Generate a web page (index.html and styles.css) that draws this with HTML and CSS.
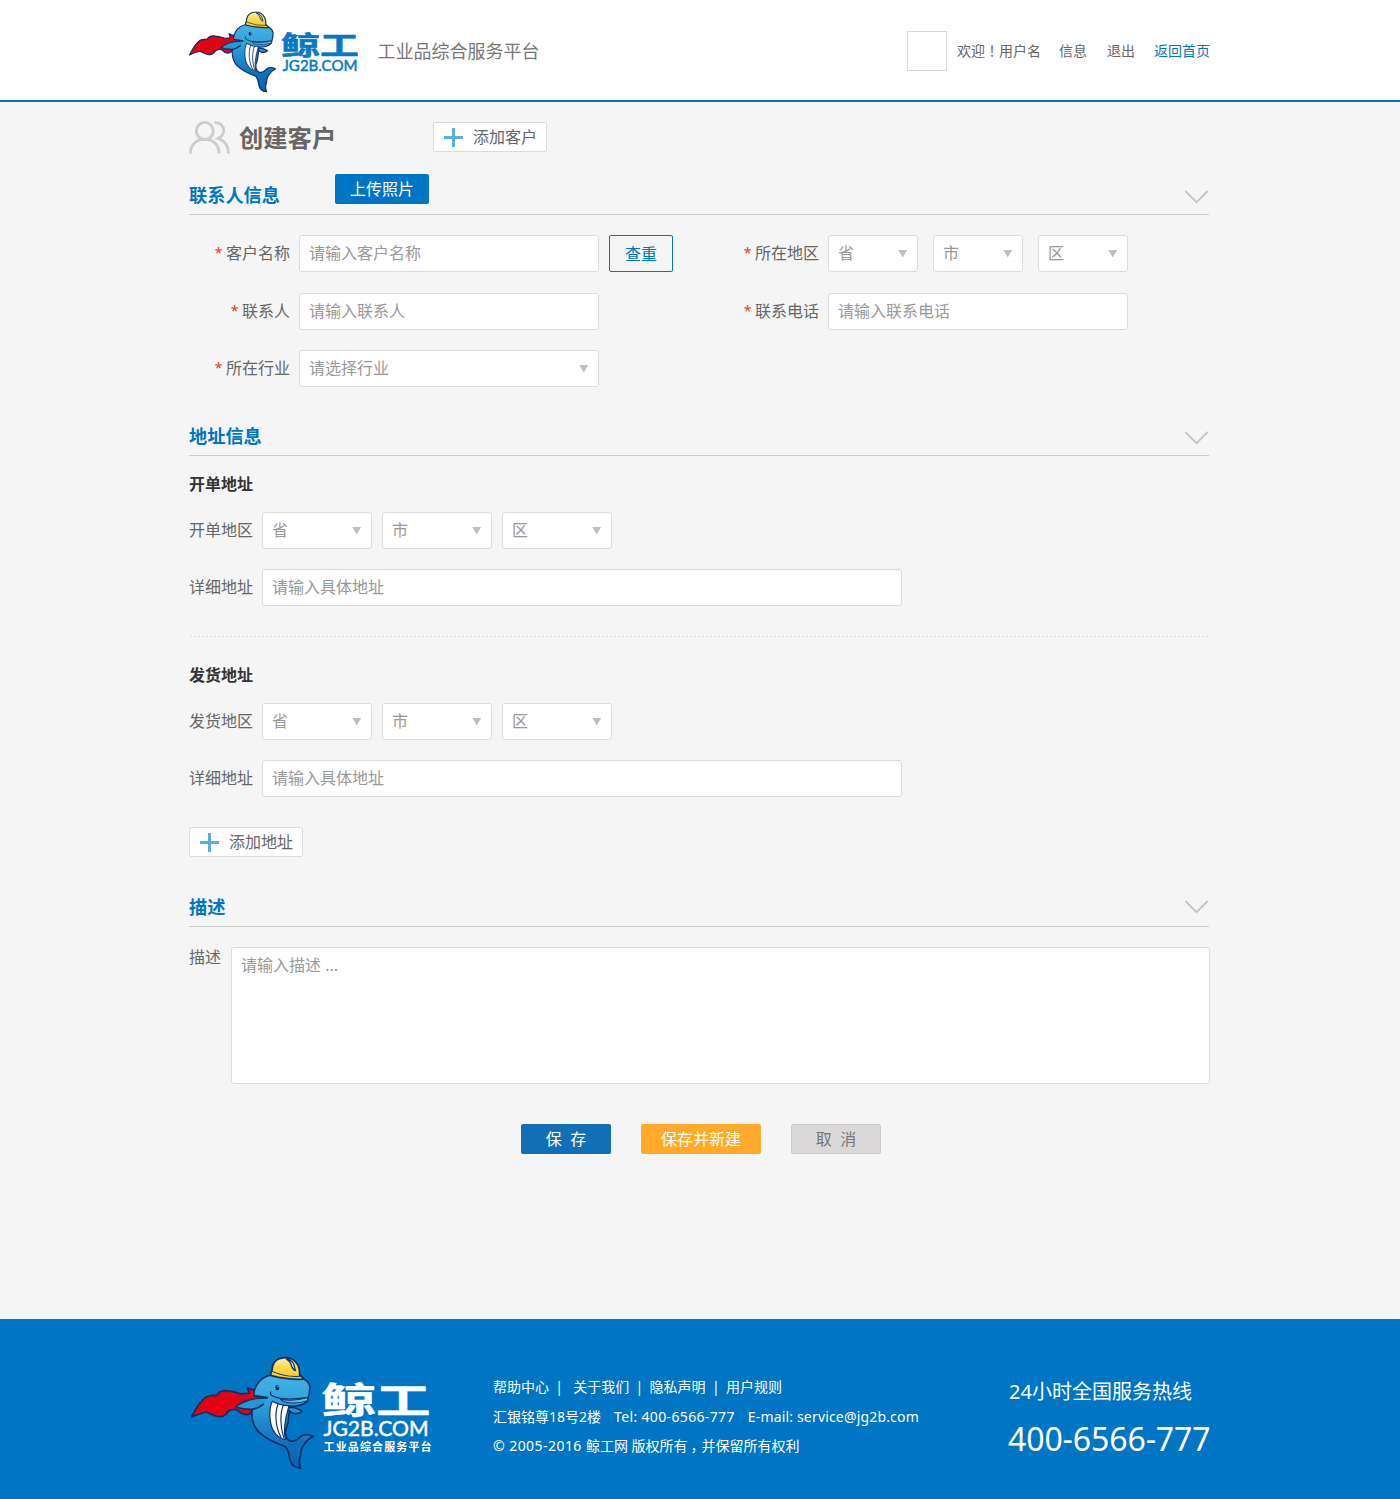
FILE: index.html
```html
<!DOCTYPE html>
<html lang="zh-CN">
<head>
<meta charset="utf-8">
<title>创建客户</title>
<link rel="stylesheet" href="styles.css">
</head>
<body>
<svg class="defs" width="0" height="0" aria-hidden="true">
  <defs>
    <linearGradient id="skin" x1="0" y1="0" x2="0" y2="1">
      <stop offset="0" stop-color="#45b4e6"/><stop offset=".35" stop-color="#2a9cd8"/><stop offset=".7" stop-color="#1272bd"/><stop offset="1" stop-color="#0a5fb0"/>
    </linearGradient>
    <linearGradient id="hat" x1="0" y1="0" x2="0" y2="1">
      <stop offset="0" stop-color="#fff0a8"/><stop offset=".45" stop-color="#ffd84a"/><stop offset="1" stop-color="#fbc51d"/>
    </linearGradient>
    <symbol id="whale" viewBox="32 35 370 338" preserveAspectRatio="none">
      <g stroke="#0b2f66" stroke-width="5" stroke-linejoin="round" stroke-linecap="round">
        <path fill="#e60012" d="M34 216C47 192 58 169 78 156Q92 150 109 152Q116 138 135 137Q160 138 184 147L208 145L202 129L232 139L262 159L222 190Q213 209 197 209Q181 207 171 194Q148 190 139 207Q128 219 107 213Q90 207 78 201Q55 207 34 216Z"/>
        <path fill="url(#skin)" d="M274 90Q246 95 230 120Q220 136 222 152L262 158Q228 163 217 192Q211 232 235 260Q260 285 316 305Q327 319 329 341Q332 366 362 370Q354 350 362 330Q361 313 370 302Q382 283 400 274Q374 262 359 277Q348 291 329 288Q314 280 317 255Q326 236 329 184Q368 184 382 168Q391 142 389 122Q384 103 360 98Z"/>
        <path fill="#fff" stroke-width="3.500" d="M277 169C266 190 267 237 281 258Q292 278 316 284Q307 247 327 182Q300 182 277 169Z"/>
        <path fill="none" stroke-width="3.500" d="M294 177C283 207 287 248 303 277M310 181C299 207 301 247 311 278"/>
        <path fill="#2199d6" d="M259 159C227 158 192 165 168 186Q190 194 216 193Q235 190 250 178"/>
        <path fill="#2199d6" d="M327 188Q348 186 366 199Q352 210 338 204Q329 200 327 196"/>
        <path fill="none" stroke-width="3.500" d="M272 141Q269 150 280 154Q309 168 382 158"/>
        <path fill="#5cc0ea" stroke-width="3" d="M301 163Q340 171 383 158L383 167Q348 179 313 171Z"/>
        <path fill="url(#hat)" d="M276 78Q275 51 299 41Q335 30 352 58Q359 68 359 91Q371 97 367 103Q326 105 274 92Q270 82 276 78Z"/>
        <path fill="none" stroke-width="3" d="M278 80Q318 97 360 94"/>
        <path fill="#fff3bd" stroke-width="4" d="M319 42Q342 44 346 77Q338 75 333 58Q329 48 319 42Z"/>
      </g>
      <path d="M105 204Q145 164 244 158M73 190Q111 158 185 154" fill="none" stroke="#b00f24" stroke-width="2"/>
      <ellipse cx="292" cy="128" rx="6" ry="8" fill="#0b2f66"/><circle cx="294" cy="125" r="1.800" fill="#fff"/>
    </symbol>
    <symbol id="plus" viewBox="0 0 19 19"><path d="M9.500 0v19M0 9.500h19" stroke="#5dade2" stroke-width="3"/></symbol>
    <symbol id="chevron" viewBox="0 0 24 14"><path d="M.3 1L11.500 12.200 22.700 1" fill="none" stroke="#c4c4c4" stroke-width="1.800"/></symbol>
  </defs>
</svg>

<header class="header">
  <div class="wrap header-inner">
    <svg class="logo-small" viewBox="0 0 169 82" role="img" aria-label="鲸工 JG2B.COM">
      <use href="#whale" y=".3" width="87" height="81.300"/>
      <text class="logo-cn" x="92" y="43.500" font-size="26" textLength="78" lengthAdjust="spacingAndGlyphs">鲸工</text>
      <text class="logo-en" x="93.500" y="59.500" font-size="15" textLength="75" lengthAdjust="spacingAndGlyphs">JG2B.COM</text>
    </svg>
    <span class="slogan">工业品综合服务平台</span>
    <nav class="user-nav">
      <span class="avatar"></span>
      <span class="welcome">欢迎<span class="mark" lang="zh-TW">！</span>用户名</span>
      <a class="nav-link" href="#">信息</a>
      <a class="nav-link logout" href="#">退出</a>
      <a class="nav-link home" href="#">返回首页</a>
    </nav>
  </div>
</header>

<main class="wrap main">
  <div class="page-title">
    <svg class="people" viewBox="0 0 41 33" fill="none" stroke="#ccc" stroke-width="2.800">
      <circle cx="15.800" cy="9.900" r="8.500"/>
      <path d="M1.400 32.500C1.500 23.500 7.500 18.400 15.800 18.400S30 23.500 30 32.500M25.300 1.600C31 1.100 34.700 5 34.700 9.400C34.700 13.200 32.500 15.800 29 17.500C36 19.800 39.400 25.500 39.400 32.500"/>
    </svg>
    <h1 class="title">创建客户</h1>
    <button class="add-btn add-customer"><svg class="plus"><use href="#plus"/></svg>添加客户</button>
  </div>

  <section class="section">
    <div class="section-head">
      <h2 class="section-title">联系人信息</h2>
      <button class="upload">上传照片</button>
      <svg class="chevron"><use href="#chevron"/></svg>
    </div>
    <div class="contact-grid">
      <label class="label"><i class="req">*</i>客户名称</label>
      <div class="fields tight"><input class="input" placeholder="请输入客户名称"><button class="check">查重</button></div>
      <label class="label"><i class="req">*</i>所在地区</label>
      <div class="fields wide"><div class="select region">省</div><div class="select region">市</div><div class="select region">区</div></div>

      <label class="label"><i class="req">*</i>联系人</label>
      <div class="fields"><input class="input" placeholder="请输入联系人"></div>
      <label class="label"><i class="req">*</i>联系电话</label>
      <div class="fields"><input class="input" placeholder="请输入联系电话"></div>
    </div>
    <div class="contact-grid industry">
      <label class="label"><i class="req">*</i>所在行业</label>
      <div class="fields"><div class="select">请选择行业</div></div>
    </div>
  </section>

  <section class="section address">
    <div class="section-head">
      <h2 class="section-title">地址信息</h2>
      <svg class="chevron"><use href="#chevron"/></svg>
    </div>
    <h3 class="subtitle">开单地址</h3>
    <div class="address-row">
      <label class="side-label">开单地区</label>
      <div class="fields tight"><div class="select area">省</div><div class="select area">市</div><div class="select area">区</div></div>
    </div>
    <div class="address-row">
      <label class="side-label">详细地址</label>
      <input class="input detail" placeholder="请输入具体地址">
    </div>
    <hr class="divider">
    <h3 class="subtitle shipping">发货地址</h3>
    <div class="address-row">
      <label class="side-label">发货地区</label>
      <div class="fields tight"><div class="select area">省</div><div class="select area">市</div><div class="select area">区</div></div>
    </div>
    <div class="address-row">
      <label class="side-label">详细地址</label>
      <input class="input detail" placeholder="请输入具体地址">
    </div>
    <button class="add-btn add-address"><svg class="plus"><use href="#plus"/></svg>添加地址</button>
  </section>

  <section class="section description">
    <div class="section-head">
      <h2 class="section-title">描述</h2>
      <svg class="chevron chevron-high"><use href="#chevron"/></svg>
    </div>
    <div class="desc-row">
      <label class="desc-label">描述</label>
      <textarea class="textarea" placeholder="请输入描述 ..."></textarea>
    </div>
  </section>

  <div class="actions">
    <button class="action save">保&nbsp; 存</button>
    <button class="action save-new">保存并新建</button>
    <button class="action cancel">取&nbsp; 消</button>
  </div>
</main>

<footer class="footer">
  <div class="wrap footer-inner">
    <svg class="logo-large" viewBox="0 0 243 116" role="img" aria-label="鲸工 JG2B.COM 工业品综合服务平台">
      <use href="#whale" x=".700" y=".600" width="123.300" height="112.700"/>
      <text class="logo-cn" x="131.500" y="57.500" font-size="36" textLength="109" lengthAdjust="spacingAndGlyphs">鲸工</text>
      <text class="logo-en" x="133.500" y="79.500" font-size="21" textLength="105" lengthAdjust="spacingAndGlyphs">JG2B.COM</text>
      <text class="logo-tag" x="133.500" y="95" font-size="11" textLength="108">工业品综合服务平台</text>
    </svg>
    <div class="footer-info">
      <div class="footer-links"><a class="flink">帮助中心</a><i class="bar">|</i><a class="flink about">关于我们</a><i class="bar">|</i><a class="flink">隐私声明</a><i class="bar">|</i><a class="flink">用户规则</a></div>
      <div class="footer-contact"><span class="place">汇银铭尊18号2楼</span><span class="tel">Tel: 400-6566-777</span><span class="mail">E-mail: service@jg2b.com</span></div>
      <div class="copyright"><span class="years">© 2005-2016 </span>鲸工网 版权所有<span class="comma">，</span>并保留所有权利</div>
    </div>
    <div class="hotline">
      <div class="hotline-title">24小时全国服务热线</div>
      <div class="hotline-number">400-6566-777</div>
    </div>
  </div>
</footer>
</body>
</html>
```
FILE: styles.css
```css
* { box-sizing: border-box; }
body {
  margin: 0;
  background: #f5f5f5;
  color: #666;
  font: 16px/24px "Noto Sans", "Noto Sans CJK SC", sans-serif;
}
button, input, textarea { font: inherit; margin: 0; }
button { cursor: pointer; padding: 0; }
a { color: inherit; text-decoration: none; }
i { font-style: normal; }
h1, h2, h3 { margin: 0; }
.defs { position: absolute; }
.wrap { width: 1022px; margin: 0 auto; }
.mark { font-family: "Noto Sans CJK TC", sans-serif; line-height: 1; }

/* header */
.header { height: 102px; background: #fff; border-bottom: 2px solid #126fb6; }
.header-inner { display: flex; align-items: center; height: 100px; }
.logo-small { width: 169px; height: 82px; margin-top: 3px; flex: none; }
.logo-cn { font-family: "Noto Sans CJK SC", sans-serif; font-weight: 700; stroke-width: .5px; }
.logo-en { font-family: Lato, sans-serif; font-weight: 400; stroke-width: .5px; }
.logo-tag { font-family: "Noto Sans CJK SC", sans-serif; font-weight: 700; }
.logo-small text { fill: #0878c4; stroke: #0878c4; }
.slogan { margin: 2px 0 0 19.500px; font-size: 18px; color: #777; }
.user-nav { display: flex; align-items: center; margin: 2px 1px 0 auto; font-size: 14px; }
.avatar { width: 40px; height: 40px; border: 1px solid #d9d9d9; background: #fff; }
.welcome { margin-left: 10px; }
.nav-link { margin-left: 18px; }
.logout { margin-left: 20px; }
.home { margin-left: 19px; color: #0075c4; }

/* page title */
.page-title { display: flex; align-items: center; height: 72px; }
.people { width: 41px; height: 33px; margin-top: -2px; }
.title { width: 193px; margin: -1px 0 0 9px; font-size: 24.300px; line-height: 36px; font-weight: 700; }
.add-btn {
  display: flex; align-items: center; gap: 10px;
  width: 114px; height: 30px; padding-left: 10px; margin-top: -2px;
  border: 1px solid #dcdcdc; border-radius: 2px; background: #fff; color: #666;
}
.add-customer { margin-left: 1px; }
.plus { width: 19px; height: 19px; flex: none; }

/* sections */
.section { width: 1020px; }
.section-head { display: flex; height: 41px; border-bottom: 1px solid #ccc; }
.section-title { width: 146px; font-size: 18.200px; line-height: 42px; font-weight: 700; color: #0075c4; }
.upload { width: 94px; height: 30px; border: 0; border-radius: 2px; background: #0075c4; color: #fff; }
.chevron { width: 24px; height: 14px; margin: 16px 0 0 auto; }
.chevron-high { margin-top: 14px; }

/* form fields */
.contact-grid {
  display: grid; grid-template-columns: 110px 374px 155px 300px;
  row-gap: 21px; margin-top: 20px;
}
.industry { margin-top: 20px; }
.label { padding-right: 9px; line-height: 37px; text-align: right; white-space: nowrap; }
.req { display: inline-block; height: 37px; margin-right: 3.500px; color: #e13d26; font-size: 14px; line-height: 35px; vertical-align: top; }
.fields { display: flex; }
.tight { gap: 10px; }
.wide { gap: 15px; }
.input, .select, .textarea {
  border: 1px solid #dcdcdc; border-radius: 3px; background: #fff; color: #999;
}
.input, .select { width: 300px; height: 37px; padding: 0 9px; line-height: 35px; }
.input { padding-bottom: 2px; }
::placeholder { color: #999; opacity: 1; }
.select { display: flex; align-items: center; justify-content: space-between; }
.select::after {
  content: ""; width: 10px; height: 8px; background: #bfbfbf;
  clip-path: polygon(0 0, 95% 0, 47.500% 100%);
}
.region { width: 90px; }
.area { width: 110px; }
.check { width: 64px; height: 37px; border: 1px solid #0075c4; border-radius: 2px; background: transparent; color: #0075c4; }

/* addresses */
.address { margin-top: 28px; }
.subtitle { font-size: 16px; line-height: 56px; font-weight: 700; color: #333; }
.shipping { padding-top: 10px; }
.address-row { display: flex; height: 37px; }
.address-row + .address-row { margin-top: 20px; }
.side-label { width: 73px; line-height: 37px; }
.detail { width: 640px; }
.divider { height: 1px; margin: 30px 0 0; border: 0; background: repeating-linear-gradient(90deg, transparent 0 1px, #dcdcdc 1px 3px, transparent 3px 4px); }
.add-address { margin-top: 30px; }

/* description */
.description { margin-top: 29px; }
.desc-row { display: flex; width: 1021px; margin-top: 20px; }
.desc-label { width: 42px; line-height: 21px; }
.textarea { display: block; width: 979px; height: 137px; padding: 5px 9px; resize: none; }

/* form actions */
.actions { display: flex; gap: 30px; height: 235px; padding: 40px 0 0 332px; }
.action { width: 90px; height: 30px; border: 0; border-radius: 2px; color: #fff; }
.save { background: #126fb6; }
.save-new { width: 120px; background: #ffaa2b; }
.cancel { border: 1px solid #ccc; background: #dad8d9; color: #777; }

/* footer */
.footer { height: 180px; background: #0075c4; color: #fff; }
.footer-inner { display: flex; }
.logo-large { width: 243px; height: 116px; margin: 37px 0 0 1px; flex: none; }
.logo-large text { fill: #fff; }
.logo-large .logo-en, .logo-large .logo-cn { stroke: #fff; }
.footer-info { width: 516px; margin: 53px 0 0 60px; font-size: 14px; line-height: 29.500px; white-space: nowrap; }
.footer-links, .footer-contact { display: flex; align-items: center; }
.bar { width: 20.300px; text-align: center; }
.about { margin-left: 4px; }
.tel { margin-left: 13px; letter-spacing: .35px; }
.mail { margin-left: 13px; letter-spacing: .17px; }
.years { letter-spacing: .45px; }
.comma { position: relative; left: 3px; }
.copyright { height: 29.500px; }
.hotline { white-space: nowrap; }
.hotline-title { margin-top: 58px; font-size: 20px; line-height: 30px; }
.hotline-number { margin: 8px 0 0 -1px; font-size: 32px; line-height: 48px; letter-spacing: -.1px; }
```
